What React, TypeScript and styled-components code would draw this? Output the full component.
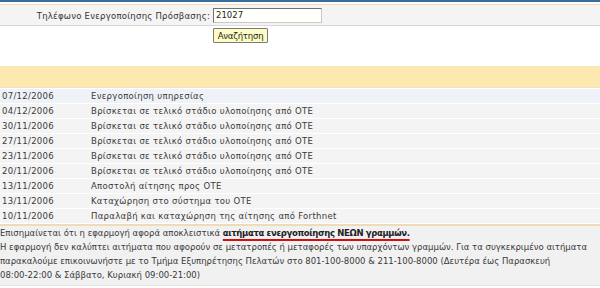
import styled, { createGlobalStyle } from "styled-components";

const GlobalStyle = createGlobalStyle`
  body {
    margin: 0;
    background: #ffffff;
    font-family: "DejaVu Sans", Verdana, sans-serif;
    font-size: 8.5px;
    color: #333333;
  }
`;

const history = [
  { date: "07/12/2006", text: "Ενεργοποίηση υπηρεσίας" },
  { date: "04/12/2006", text: "Βρίσκεται σε τελικό στάδιο υλοποίησης από ΟΤΕ" },
  { date: "30/11/2006", text: "Βρίσκεται σε τελικό στάδιο υλοποίησης από ΟΤΕ" },
  { date: "27/11/2006", text: "Βρίσκεται σε τελικό στάδιο υλοποίησης από ΟΤΕ" },
  { date: "23/11/2006", text: "Βρίσκεται σε τελικό στάδιο υλοποίησης από ΟΤΕ" },
  { date: "20/11/2006", text: "Βρίσκεται σε τελικό στάδιο υλοποίησης από ΟΤΕ" },
  { date: "13/11/2006", text: "Αποστολή αίτησης προς ΟΤΕ" },
  { date: "13/11/2006", text: "Καταχώρηση στο σύστημα του ΟΤΕ" },
  { date: "10/11/2006", text: "Παραλαβή και καταχώρηση της αίτησης από Forthnet" },
];

const App = () => {
  return (
    <Page>
      <GlobalStyle />
      <TopRule />
      <SearchRow>
        <Label>Τηλέφωνο Ενεργοποίησης Πρόσβασης:</Label>
        <PhoneInput defaultValue="21027" />
      </SearchRow>
      <ButtonRow>
        <SearchButton>Αναζήτηση</SearchButton>
      </ButtonRow>
      <Band />
      <HistoryList>
        {history.map((item, i) => (
          <HistoryRow key={i} $first={i === 0}>
            <span>{item.date}</span>
            <span>{item.text}</span>
          </HistoryRow>
        ))}
      </HistoryList>
      <Notice>
        <NoticeLine>
          Επισημαίνεται ότι η εφαρμογή αφορά αποκλειστικά{" "}
          <Marked>αιτήματα ενεργοποίησης ΝΕΩΝ γραμμών.</Marked>
        </NoticeLine>
        <NoticeLine>
          Η εφαρμογή δεν καλύπτει αιτήματα που αφορούν σε μετατροπές ή
          μεταφορές των υπαρχόντων γραμμών. Για τα συγκεκριμένο αιτήματα
        </NoticeLine>
        <NoticeLine>
          παρακαλούμε επικοινωνήστε με το Τμήμα Εξυπηρέτησης Πελατών στο
          801-100-8000 &amp; 211-100-8000 (Δευτέρα έως Παρασκευή
        </NoticeLine>
        <NoticeLine>08:00-22:00 &amp; Σάββατο, Κυριακή 09:00-21:00)</NoticeLine>
      </Notice>
    </Page>
  );
};

const Page = styled.div`
  width: 600px;
  height: 288px;
  overflow: hidden;
`;

const TopRule = styled.div`
  height: 2px;
  background: #3a6d9c;
  border-bottom: 2px solid #ffffff;
`;

const SearchRow = styled.div`
  display: grid;
  grid-template-columns: 210px 109px;
  column-gap: 3px;
  align-items: center;
  height: 20px;
  background: #f4f4f4;
  border-top: 1px solid #ecdcc0;
  border-bottom: 1px solid #d8d8d8;
`;

const Label = styled.label`
  text-align: right;
  color: #333333;
  letter-spacing: 0.25px;
  padding-top: 2px;
`;

const PhoneInput = styled.input`
  box-sizing: border-box;
  width: 109px;
  height: 15px;
  padding: 0 2px;
  font: inherit;
  color: #222222;
  background: #fffffb;
  border: 1px solid #c8c8c8;
  border-top-color: #707070;
  border-left-color: #707070;
  outline: none;
`;

const ButtonRow = styled.div`
  padding: 2px 0 0 213px;
  height: 38px;
`;

const SearchButton = styled.button`
  box-sizing: border-box;
  width: 55px;
  height: 15px;
  padding: 0;
  font: inherit;
  letter-spacing: -0.2px;
  color: #222222;
  background: #fdfcc4;
  border: 1px solid #7a7a7a;
  border-radius: 1px;
`;

const Band = styled.div`
  height: 20px;
  background: #fde9b0;
  border-top: 1px solid #fbe6bb;
  border-bottom: 1px solid #f1e2c4;
`;

const HistoryList = styled.div`
  display: flex;
  flex-direction: column;
  gap: 1px;
  padding: 1px 0;
  border-bottom: 2px solid #efdcb6;
`;

const HistoryRow = styled.div<{ $first?: boolean }>`
  display: grid;
  grid-template-columns: 89px 1fr;
  align-items: center;
  height: 14px;
  padding-left: 2px;
  background: ${(p) => (p.$first ? "#eff3f9" : "#f4f4f4")};
  color: #3a3a3a;
  letter-spacing: 0.3px;
`;

const Notice = styled.div`
  background: #f1f1f1;
  padding: 0 0 3px 0;
  line-height: 14px;
  color: #3a3a3a;
  border-bottom: 1px solid #e4e4e4;
`;

const NoticeLine = styled.div`
  white-space: nowrap;
`;

const Marked = styled.b`
  color: #222222;
  letter-spacing: -0.35px;
  text-decoration: underline;
  text-decoration-color: #d01010;
  text-decoration-thickness: 2px;
  text-underline-offset: 2.5px;
`;

export default App;
